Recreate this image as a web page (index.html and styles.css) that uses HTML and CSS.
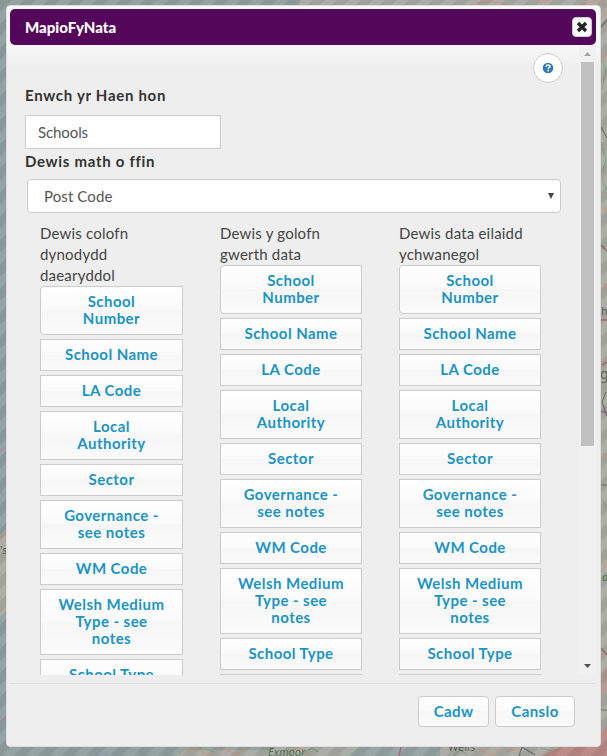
FILE: index.html
```
<!DOCTYPE html>
<html lang="cy">
<head>
<meta charset="utf-8">
<title>MapioFyNata</title>
<link rel="stylesheet" href="styles.css">
</head>
<body>
<svg class="map" width="607" height="756" viewBox="0 0 607 756" aria-hidden="true">
  <defs>
    <pattern id="stripes" width="17" height="17" patternUnits="userSpaceOnUse" patternTransform="rotate(45)">
      <rect width="8.5" height="17" fill="#000" opacity=".07"/>
    </pattern>
  </defs>
  <rect width="607" height="756" fill="#95a3a2"/>
  <path d="M300 0H607V756H438V747H395L370 742L310 746L285 744L270 750H188L175 756H440V400H300Z" fill="#adada7"/>
  <path d="M0 535L7 528V610L0 616Z" fill="#adafa6"/>
  <path d="M313 746H360L348 756H438V740H313Z" fill="#98a6a5"/>
  <g fill="none" stroke-width="1.2">
    <path stroke="#8f98b2" stroke-dasharray="5 4" d="M146 4L163 -1M0 53L6 56M0 87L6 90M0 111H6M0 493L6 496M94 756L150 747"/>
    <path stroke="#a58fa9" d="M0 451L6 448M0 722L6 717"/>
    <path stroke="#c49a86" d="M0 538L7 533M182 752L196 748L210 756M222 748L236 754L246 748M288 752L300 748L310 755M480 750L492 755L502 747M506 752L520 748M470 5L490 1L505 4M535 4L548 0M580 5L596 0L607 6M601 18L607 10M601 62L607 54M601 206L607 211M601 246H607M601 294L607 283M601 454H607M601 572L607 562"/>
    <path stroke="#a8697a" stroke-width="1.5" d="M401 747L399 756M601 320H607M602 365L607 362M601 411L607 413M601 648L607 655"/>
    <path stroke="#8da088" d="M200 748L214 752M298 756L312 748L318 752M453 756L460 750L468 755M540 748L565 754M602 60L606 70L602 90M602 180L607 190M602 500L607 508M601 142L606 160L602 172"/>
    <path stroke="#6c7070" d="M519 756L522 747L535 755M601 245L607 251M601 27L607 20M601 127L607 138M606 392L602 402L607 416M601 485H607M601 710H607"/>
  </g>
  <path d="M540 756L560 747H590L607 726V756Z" fill="#bd8c89"/>
  <path d="M601 674L607 667V690L601 697Z" fill="#b59b97"/>
  <rect width="607" height="756" fill="url(#stripes)"/>
  <g class="map-label">
    <text x="268" y="756" class="park">Exmoor</text>
    <text x="448" y="751">Wells</text>
    <text x="0" y="554">'s</text>
    <text x="601" y="315">h</text>
    <text x="600" y="379" class="large">g</text>
    <text x="602" y="581" class="park">d</text>
  </g>
</svg>
<div class="dialog">
  <header class="titlebar">
    <span class="title">MapioFyNata</span>
    <button class="close" aria-label="Close">
      <svg width="12" height="12" viewBox="0 0 12 12"><path d="M2 2L10 10M10 2L2 10" stroke="#222" stroke-width="3.3"/></svg>
    </button>
  </header>
  <div class="body">
    <div class="content">
      <div class="help-row"><button class="help" aria-label="Help">
        <svg width="12" height="12" viewBox="0 0 12 12"><circle cx="6" cy="6" r="5.3" fill="#337ab7"/><path d="M4.2 4.8C4.2 2.4 8 2.4 8 4.500C8 5.800 6.200 5.600 6.200 7" fill="none" stroke="#fff" stroke-width="1.5"/><rect x="5.4" y="7.8" width="1.6" height="1.5" fill="#fff"/></svg>
      </button></div>
      <label class="label name-label">Enwch yr Haen hon</label>
      <div class="input">Schools</div>
      <label class="label type-label">Dewis math o ffin</label>
      <div class="select"><span>Post Code</span><svg width="6" height="7" viewBox="0 0 6 7"><path d="M0 0H6L3 6Z" fill="#444"/></svg></div>
      <div class="columns">
        <section class="column">
          <p>Dewis colofn<br>dynodydd<br>daearyddol</p>
          <button>School<br>Number</button><button>School Name</button><button>LA Code</button><button>Local<br>Authority</button><button>Sector</button><button>Governance -<br>see notes</button><button>WM Code</button><button>Welsh Medium<br>Type - see<br>notes</button><button>School Type</button>
        </section>
        <section class="column">
          <p>Dewis y golofn<br>gwerth data</p>
          <button>School<br>Number</button><button>School Name</button><button>LA Code</button><button>Local<br>Authority</button><button>Sector</button><button>Governance -<br>see notes</button><button>WM Code</button><button>Welsh Medium<br>Type - see<br>notes</button><button>School Type</button><button></button>
        </section>
        <section class="column">
          <p>Dewis data eilaidd<br>ychwanegol</p>
          <button>School<br>Number</button><button>School Name</button><button>LA Code</button><button>Local<br>Authority</button><button>Sector</button><button>Governance -<br>see notes</button><button>WM Code</button><button>Welsh Medium<br>Type - see<br>notes</button><button>School Type</button><button></button>
        </section>
      </div>
    </div>
    <div class="scrollbar">
      <svg class="arrow" width="17" height="17" viewBox="0 0 17 17"><path d="M5 11H12L8.500 7Z" fill="#a3a3a3"/></svg>
      <div class="track"><div class="thumb"></div></div>
      <svg class="arrow" width="17" height="17" viewBox="0 0 17 17"><path d="M5 6H12L8.500 10Z" fill="#505050"/></svg>
    </div>
  </div>
  <footer class="footer"><button class="save">Cadw</button><button class="cancel">Canslo</button></footer>
</div>
</body>
</html>
```
FILE: styles.css
```
* { box-sizing: border-box; }
body { margin: 0; height: 756px; overflow: hidden; font-family: Lato, sans-serif; padding: 5px 6px; }
button { font: inherit; padding: 0; margin: 0; }
.map { position: absolute; left: 0; top: 0; z-index: -1; }
.map-label text { font: 11px "Noto Sans", sans-serif; fill: #5b5e5e; }
.map-label .park { font-style: italic; fill: #4f6f55; }
.map-label .large { font-size: 14px; }
.dialog { width: 595px; height: 742px; border: 1px solid #ddd; border-radius: 4px; padding: 3px 4px 3px 3px; display: flex; flex-direction: column; background: linear-gradient(#f9f9f9 0, #f9f9f9 40px, #eee 62px, #eee 100%); }
.titlebar { height: 36px; flex: none; border-radius: 5px; background: #54065b; display: flex; align-items: center; justify-content: space-between; padding: 0 4px 0 15px; color: #fff; }
.title { font-size: 15px; font-weight: 900; letter-spacing: 0; }
.close { width: 20px; height: 20px; border: 1px solid #ccc; border-radius: 4px; background: #f8f8f8; display: grid; place-items: center; }
.body { height: 630px; flex: none; display: flex; }
.content { flex: 1; min-width: 0; overflow: hidden; padding: 8px 18px 0 15px; color: #444; font-size: 15px; }
.help-row { display: flex; justify-content: flex-end; height: 30px; margin-right: -2px; }
.help { width: 30px; height: 30px; border: 1px solid #ccc; border-radius: 50%; background: #fff; display: grid; place-items: center; }
.label { display: block; font-weight: 700; color: #333; line-height: 20px; letter-spacing: .7px; }
.name-label { margin-top: 2px; }
.input { width: 196px; height: 34px; margin-top: 10px; border: 1px solid #ccc; background: #fff; padding-left: 12px; line-height: 32px; color: #555; letter-spacing: -.1px; }
.type-label { margin-top: 2px; }
.select { width: 534px; height: 34px; margin: 8px 0 0 2px; border: 1px solid #ccc; border-radius: 4px; background: #fff; display: flex; align-items: center; justify-content: space-between; padding: 0 6px 0 16px; color: #555; letter-spacing: .1px; }
.columns { display: grid; grid-template-columns: 143px 142px 142px; column-gap: 37px; margin: 10px 0 0 15px; align-items: start; }
.column { display: flex; flex-direction: column; gap: 4px; }
.column p { margin: 0 0 -4px; line-height: 21px; white-space: nowrap; letter-spacing: .2px; }
.column button, .footer button { border: 1px solid #ccc; background: linear-gradient(#fff, #fafafa 49%, #f6f6f6 50%, #fbfbfb); color: #1c94c4; font-weight: 700; letter-spacing: .45px; line-height: 17px; }
.column button { min-height: 32px; padding: 5.500px 0 7.500px; flex: none; }
.column button:first-of-type { border-radius: 4px 0 0 4px; }
.scrollbar { width: 17px; display: flex; flex-direction: column; background: #f1f1f1; }
.arrow { display: block; flex: none; }
.track { flex: 1; padding: 0 2px; }
.thumb { height: 384px; background: #c1c1c1; }
.footer { margin-top: 8px; border-top: 1px solid #ddd; padding: 12px 21px 0 0; display: flex; justify-content: flex-end; gap: 6px; }
.footer button { height: 31px; border-radius: 4px; font-size: 15px; letter-spacing: .4px; }
.save { width: 71px; }
.cancel { width: 80px; }
```
